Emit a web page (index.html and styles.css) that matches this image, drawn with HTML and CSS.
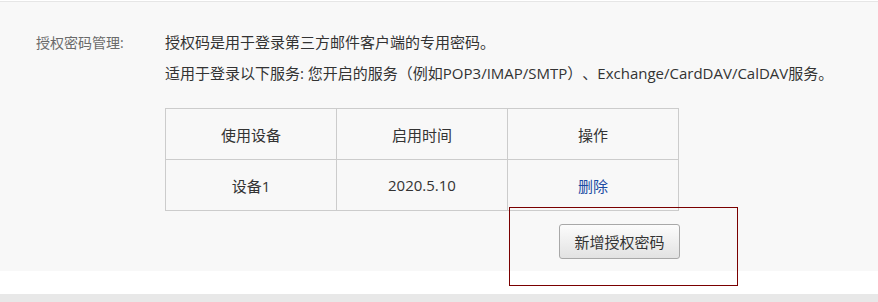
FILE: index.html
```html
<!DOCTYPE html>
<html lang="zh-CN">
<head>
  <meta charset="UTF-8">
  <title>授权密码管理</title>
  <link rel="stylesheet" href="styles.css">
</head>
<body>

  <div class="panel">
    <div class="label">授权密码管理:</div>
    <div class="content">
      <p class="desc">授权码是用于登录第三方邮件客户端的专用密码。</p>
      <p class="desc">适用于登录以下服务: 您开启的服务（例如POP3/IMAP/SMTP）、Exchange/CardDAV/CalDAV服务。</p>

      <div class="devices">
        <table class="device-table">
          <tr>
            <th>使用设备</th>
            <th>启用时间</th>
            <th>操作</th>
          </tr>
          <tr>
            <td>设备1</td>
            <td>2020.5.10</td>
            <td><a href="#" class="del">删除</a></td>
          </tr>
        </table>
        <div class="actions">
          <button class="add-btn">新增授权密码</button>
        </div>
      </div>
    </div>
  </div>

  <div class="footer-bar"></div>

  <!-- 标注框 -->
  <div class="mark"></div>

</body>
</html>
```

FILE: styles.css
```css
body {
  margin: 0;
  background: #fff;
  font-family: "Open Sans", "Noto Sans CJK SC", sans-serif;
  color: #333;
  text-spacing-trim: space-all;
}
.panel {
  display: flex;
  margin-top: 1px;
  border-top: 1px solid #e6e6e6;
  background: #f8f8f8;
  padding: 25px 0 12px 36px;
}
.label {
  width: 129px;
  flex-shrink: 0;
  font-size: 14px;
  line-height: 31px;
  color: #6a6a6a;
}
.content {
  font-size: 15px;
}
.desc {
  margin: 0;
  line-height: 31px;
}
.devices {
  width: 514px;
  margin-top: 19px;
}
.device-table {
  width: 514px;
  border-collapse: collapse;
  table-layout: fixed;
}
.device-table th,
.device-table td {
  border: 1px solid #ccc;
  height: 50px;
  padding: 0;
  text-align: center;
  font-weight: normal;
  font-size: 15px;
}
.del {
  color: #1b4ca3;
  text-decoration: none;
}
.actions {
  display: flex;
  justify-content: flex-end;
  margin-top: 13px;
}
.add-btn {
  width: 121px;
  height: 35px;
  margin-right: -1px;
  font-family: "Open Sans", "Noto Sans CJK SC", sans-serif;
  font-size: 15px;
  color: #333;
  border: 1px solid #a8a8a8;
  border-radius: 3px;
  background: linear-gradient(#fcfcfc, #e2e2e2);
  cursor: pointer;
}
.footer-bar {
  margin-top: 23px;
  height: 20px;
  background: #e8e8e8;
}
.mark {
  position: absolute;
  left: 509px;
  top: 207px;
  width: 229px;
  height: 79px;
  box-sizing: border-box;
  border: 1px solid #7a0000;
}
```
